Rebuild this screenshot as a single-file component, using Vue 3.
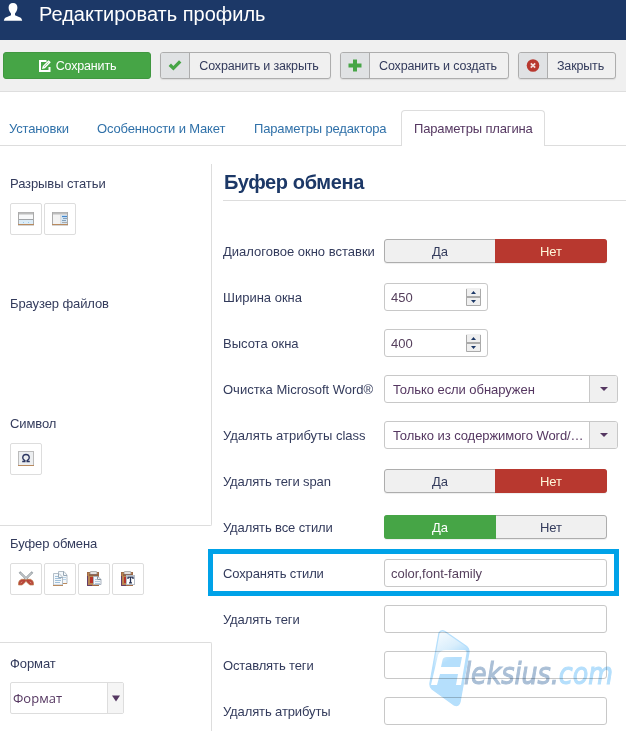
<script setup>
import { ref } from 'vue'

const actions = [
  { icon: 'check', label: 'Сохранить и закрыть', cls: 'close-save' },
  { icon: 'plus', label: 'Сохранить и создать', cls: 'new-save' },
  { icon: 'cancel', label: 'Закрыть', cls: 'cancel' },
]
const tabs = [
  { label: 'Установки', cls: 't1' },
  { label: 'Особенности и Макет', cls: 't2' },
  { label: 'Параметры редактора', cls: 't3' },
  { label: 'Параметры плагина', cls: 'active' },
]
const sections = [
  { title: 'Разрывы статьи', icons: ['more', 'page'], cls: 'first' },
  { title: 'Браузер файлов', icons: [], cls: '' },
  { title: 'Символ', icons: ['omega'], cls: '' },
  { title: 'Буфер обмена', icons: ['cut', 'copy', 'paste', 'pastetext'], cls: 'open' },
  { title: 'Формат', icons: [], select: 'Формат', cls: 'last' },
]
const rows = ref([
  { label: 'Диалоговое окно вставки', type: 'toggle', value: false },
  { label: 'Ширина окна', type: 'number', value: '450' },
  { label: 'Высота окна', type: 'number', value: '400' },
  { label: 'Очистка Microsoft Word®', type: 'select', value: 'Только если обнаружен' },
  { label: 'Удалять атрибуты class', type: 'select', value: 'Только из содержимого Word/…' },
  { label: 'Удалять теги span', type: 'toggle', value: false, tight: true },
  { label: 'Удалять все стили', type: 'toggle', value: true, tight: true },
  { label: 'Сохранять стили', type: 'text', value: 'color,font-family', mark: true, tight: true },
  { label: 'Удалять теги', type: 'text', value: '', tight: true },
  { label: 'Оставлять теги', type: 'text', value: '', tight: true },
  { label: 'Удалять атрибуты', type: 'text', value: '', tight: true },
])
</script>

<template>
  <div class="page">
    <header class="header">
      <svg class="user" width="20" height="20" viewBox="0 0 20 20">
        <path fill="#fff" d="M10 1C12.800 1 14.500 2.800 14.400 5.800C14.300 8.300 13.200 10.200 12 11.400V13.200L16 15C18 15.700 18.800 16.700 19.200 18.800H0.800C1.200 16.700 2 15.700 4 15L8 13.200V11.400C6.800 10.200 5.700 8.300 5.600 5.800C5.500 2.800 7.200 1 10 1Z" />
      </svg>
      <h1>Редактировать профиль</h1>
    </header>

    <div class="toolbar">
      <button class="save">
        <svg width="14" height="14" viewBox="0 0 14 14">
          <path d="M8.500 2H2V12H11.500V8" fill="none" stroke="#fff" stroke-width="2" />
          <path d="M4 10L4.800 7L10.600 1.200L12.800 3.300L7 9.200Z" fill="#fff" />
          <path d="M6 7.800L10.500 3.400" stroke="#46a546" stroke-width="0.600" />
        </svg>
        <span>Сохранить</span>
      </button>
      <button v-for="a in actions" :key="a.icon" class="action" :class="a.cls">
        <span class="cell">
          <svg width="14" height="14" viewBox="0 0 14 14">
            <path v-if="a.icon === 'check'" d="M0.600 7L3 4.500L5.400 6.900L11 1.200L13.400 3.500L5.400 11.600Z" fill="#46a546" />
            <path v-else-if="a.icon === 'plus'" d="M5 0.500H9V4.500H13.500V8.500H9V12.500H5V8.500H0.500V4.500H5Z" fill="#46a546" />
            <g v-else>
              <circle cx="7" cy="6.500" r="6.300" fill="#b8382f" />
              <path d="M4.800 4.300L9.200 8.700M9.200 4.300L4.800 8.700" stroke="#f3dddb" stroke-width="1.700" />
            </g>
          </svg>
        </span>
        <span class="txt">{{ a.label }}</span>
      </button>
    </div>

    <nav class="tabs">
      <a v-for="t in tabs" :key="t.label" :class="t.cls"><span>{{ t.label }}</span></a>
    </nav>

    <div class="content">
      <aside class="side">
        <section v-for="s in sections" :key="s.title" :class="s.cls">
          <h3>{{ s.title }}</h3>
          <div v-if="s.icons.length" class="icons">
            <span v-for="i in s.icons" :key="i" class="tile">
              <svg width="16" height="16" viewBox="0 0 16 16">
                <g v-if="i === 'more'">
                  <rect x="0.500" y="1.500" width="15" height="12.500" fill="#f8f9fa" stroke="#aaa" />
                  <path d="M1 2.500H15" stroke="#bdbdbd" stroke-width="2" />
                  <path d="M1 8.500H15" stroke="#a0a4a8" />
                  <rect x="1" y="9" width="14" height="4" fill="#dcecf7" />
                  <path d="M5 11.500H6M10 11.500H11" stroke="#9ccbe8" />
                  <path d="M0 13.500H16" stroke="#b98a5e" />
                </g>
                <g v-else-if="i === 'page'">
                  <rect x="0.500" y="1.500" width="15" height="12.500" fill="#f3f3f3" stroke="#aaa" />
                  <path d="M1 2.500H15" stroke="#bdbdbd" stroke-width="2" />
                  <path d="M8.500 4V13" stroke="#ddd" />
                  <rect x="9" y="4" width="6" height="9" fill="#d5e5f2" />
                  <path d="M10 5.500H15" stroke="#4386cc" stroke-width="1.200" />
                  <path d="M11 7.500H15M10 9.500H14" stroke="#84a0ba" />
                  <path d="M10 11.500H15" stroke="#aaa" />
                  <path d="M0 13.500H16" stroke="#b98a5e" />
                </g>
                <g v-else-if="i === 'omega'">
                  <rect x="0.500" y="0.500" width="15" height="14" fill="#eceef0" stroke="#bbb" />
                  <path d="M0 14.500H16" stroke="#b98a5e" />
                  <path d="M4.200 10.500H6.900V9.500C3.500 7.800 4.300 3.500 8 3.500S12.500 7.800 9.100 9.500V10.500H11.800" fill="none" stroke="#2b3560" stroke-width="1.300" />
                </g>
                <g v-else-if="i === 'cut'">
                  <path d="M1.500 1L10.500 10M14.500 1L5.500 10" stroke="#8f979c" stroke-width="2.400" />
                  <path d="M2 1.500L9.500 9M14 1.500L6.500 9" stroke="#e1e5e7" stroke-width="1" />
                  <path d="M7 8.300L3.500 8.300Q0.500 9.500 0.500 12V14H4L6.500 12L8 10L9.500 12L12 14H15.500V12Q15.500 9.500 12.500 8.300L9 8.300L8 9.200Z" fill="#b8443a" stroke="#bd8150" stroke-width="0.700" />
                  <path d="M2.600 12L4.300 10.800M13.400 12L11.700 10.800" stroke="#d9a184" stroke-width="0.900" />
                </g>
                <g v-else-if="i === 'copy'">
                  <path d="M6.500 0.500H12L15 4V12.500H6.500Z" fill="#f4f8fb" stroke="#b3bec8" />
                  <path d="M11.500 0.500V4.500H15" fill="none" stroke="#98a8b6" />
                  <path d="M11 6.500H14M11 8.500H14" stroke="#b9d3e8" />
                  <path d="M1.500 2.500H7L10.500 6V14H1.500Z" fill="#f4f8fb" stroke="#b3bec8" />
                  <path d="M6.500 2.500V6.500H10.500" fill="none" stroke="#98a8b6" />
                  <path d="M3 5.500H6M3 7.500H9M3 9.500H9M3 11.500H8" stroke="#a0c0da" />
                  <path d="M1 14.500H11M11 12.500H15" stroke="#b98a5e" />
                </g>
                <g v-else>
                  <rect x="1.500" y="1.500" width="11" height="13" fill="#b98552" stroke="#a06a45" />
                  <path d="M1.500 5V14.500H6" fill="none" stroke="#643d68" />
                  <rect x="4" y="0.500" width="7" height="3" rx="1" fill="#e4e0de" stroke="#888" stroke-width="0.600" />
                  <path d="M3 4H12" stroke="#704038" />
                  <rect x="4" y="6" width="4" height="6" fill="#b7322a" />
                  <g v-if="i === 'paste'">
                    <path d="M7.500 5.500H12L15 8.500V13.500H7.500Z" fill="#f2f6fa" stroke="#aab3bf" />
                    <path d="M9 8.500H11M9 10.500H14M9 12.500H14" stroke="#b4cade" />
                    <path d="M11.500 5.500V8.500H15" fill="none" stroke="#8895a0" />
                  </g>
                  <g v-else>
                    <rect x="6.500" y="4.500" width="8" height="9" fill="#fff" stroke="#b6bec8" />
                    <path d="M8 8V6.200H13V8M10.500 6.200V11.800M9 11.800H12" fill="none" stroke="#273255" stroke-width="1.300" />
                  </g>
                </g>
              </svg>
            </span>
          </div>
          <div v-if="s.select" class="format">
            <span>{{ s.select }}</span>
            <i><svg width="8" height="7" viewBox="0 0 8 7"><path d="M0 0.500H8L4 6.500Z" fill="#553761" /></svg></i>
          </div>
        </section>
      </aside>

      <main class="main">
        <h2><span>Буфер обмена</span></h2>
        <div v-for="r in rows" :key="r.label" class="row" :class="{ mark: r.mark, tight: r.tight }">
          <label><span>{{ r.label }}</span></label>
          <div v-if="r.type === 'toggle'" class="toggle">
            <span :class="{ yes: r.value }">Да</span>
            <span :class="{ no: !r.value }">Нет</span>
          </div>
          <div v-else-if="r.type === 'number'" class="field number">
            <span>{{ r.value }}</span>
            <svg width="15" height="18" viewBox="0 0 15 18">
              <rect x="0" y="0" width="15" height="18" fill="#efefef" />
              <path d="M0.500 1V17.500H14.500V1" fill="none" stroke="#aaa" />
              <path d="M0 9H15" stroke="#aaa" stroke-width="2" />
              <path d="M5 6H10L7.500 3Z" fill="#1c3867" />
              <path d="M5 12H10L7.500 15Z" fill="#1c3867" />
            </svg>
          </div>
          <div v-else-if="r.type === 'select'" class="select">
            <span>{{ r.value }}</span>
            <i><svg width="8" height="4" viewBox="0 0 8 4"><path d="M0 0H8L4 4Z" fill="#553761" /></svg></i>
          </div>
          <div v-else class="field"><span>{{ r.value }}</span></div>
        </div>
      </main>
    </div>

    <svg class="watermark" width="198" height="80" viewBox="0 0 198 80">
      <defs>
        <linearGradient id="wm" x1="0" y1="0" x2="0.300" y2="1">
          <stop offset="0" stop-color="#fff" />
          <stop offset="0.350" stop-color="#d9eefc" />
          <stop offset="0.500" stop-color="#b5dffc" />
        </linearGradient>
      </defs>
      <path d="M11 3Q13 -0.500 17 1.500L38 16Q41 18 41 22L32 72Q31 77 26 75L4 59Q1.500 57 2 53L11 3Z" fill="url(#wm)" stroke="#b5dffc" stroke-width="1.300" />
      <path d="M3 55L10 25Q12 20 18 20H36Q39 20 38.500 23L33 55H28L30 44H12L9 55ZM13 37H32L34 27H19Q15 27 14.500 30Z" fill="#fff" fill-rule="evenodd" />
      <text x="36" y="54" textLength="149" lengthAdjust="spacingAndGlyphs" fill="#aabfd6" stroke="#aabfd6">leksius.<tspan fill="#b5dffc" stroke="#b5dffc">com</tspan></text>
    </svg>
  </div>
</template>

<style>
body { margin: 0; background: #fff; overflow: hidden; }
</style>

<style scoped>
.page { position: relative; width: 626px; height: 731px; overflow: hidden; background: #fff; font-family: "Liberation Sans", Arial, sans-serif; font-size: 13px; color: #333b5c; line-height: 18px; }
.page * { box-sizing: border-box; }
h1, h2, h3 { margin: 0; font-weight: normal; }
.header { height: 40px; background: #1c3867; display: flex; align-items: flex-start; padding: 2px 0 0 3px; }
.header h1 { margin-left: 16px; color: #fff; font-size: 20px; line-height: 25px; white-space: nowrap; }
.toolbar { height: 52px; background: #f0f0f0; border-bottom: 1px solid #dedede; display: flex; padding: 12px 0 0 3px; gap: 9px; font-size: 12.500px; letter-spacing: -0.160px; }
button { font: inherit; letter-spacing: inherit; padding: 0; height: 27px; border-radius: 3px; display: flex; align-items: center; white-space: nowrap; }
.save { width: 148px; background: #46a546; border: 1px solid #409740; color: #fff; justify-content: center; gap: 4px; }
.action { background: #f0f0f0; border: 1px solid #adadad; color: #333b5c; overflow: hidden; box-shadow: 0 1px 1px #ddd; }
.cell { width: 29px; height: 100%; background: #e0e2e4; border-right: 1px solid #adadad; display: flex; align-items: center; justify-content: center; }
.txt { flex: 1; text-align: center; padding-right: 2px; }
.close-save { width: 171px; }
.new-save { width: 169px; }
.cancel { width: 98px; }
.tabs { height: 54px; border-bottom: 1px solid #ddd; display: flex; padding-top: 18px; white-space: nowrap; letter-spacing: -0.150px; }
.tabs a { color: #3071a9; height: 36px; padding: 10px 0 0 0; }
.tabs .t1 { margin-left: 9px; width: 88px; }
.tabs .t2 { width: 157px; }
.tabs .t3 { width: 147px; }
.tabs .active { width: 144px; color: #553761; border: 1px solid #ddd; border-bottom: 0; border-radius: 4px 4px 0 0; background: #fff; padding: 9px 0 0 12px; }
.content { display: flex; }
.side { width: 212px; padding-top: 18px; flex: none; }
.side section { height: 120px; border-right: 1px solid #ddd; padding: 11px 0 0 10px; }
.side .first { height: 120px; }
.side section:nth-child(3) { height: 122px; border-bottom: 1px solid #ddd; border-radius: 0 0 2px 0; }
.side .open { height: 116px; border-right-color: transparent; padding-top: 9px; }
.side .last { border-top: 1px solid #ddd; border-radius: 0 2px 0 0; padding-top: 12px; }
.side h3 { font-size: 13px; line-height: 18px; letter-spacing: -0.100px; }
.icons { display: flex; gap: 2px; margin-top: 10px; }
.tile { width: 32px; height: 32px; border: 1px solid #ddd; border-radius: 2px; display: flex; align-items: center; justify-content: center; }
.tile svg { margin-right: 1px; }
.format { margin-top: 9px; width: 114px; height: 32px; border: 1px solid #ddd; border-radius: 2px; display: flex; align-items: center; color: #553761; font-family: "Open Sans", sans-serif; font-size: 13px; }
.format span { flex: 1; padding-left: 2px; }
.format i { width: 16px; height: 100%; background: #f5f5f5; border-left: 1px solid #ddd; display: flex; align-items: center; justify-content: center; }
.main { width: 414px; padding-left: 11px; }
h2 { height: 55px; border-bottom: 1px solid #ddd; color: #1c3867; font-size: 20px; font-weight: bold; letter-spacing: -0.380px; line-height: 24px; padding: 24px 0 0 1px; margin-bottom: 27px; }
.row { height: 46px; display: flex; align-items: center; }
.row label { width: 161px; padding-top: 2px; white-space: nowrap; flex: none; }
.tight label { letter-spacing: -0.120px; }
.toggle { width: 223px; height: 24px; display: flex; border: 1px solid #adadad; border-radius: 3px; background: #f0f0f0; box-shadow: 0 1px 1px #eee; }
.toggle span { flex: 1; text-align: center; line-height: 24px; }
.toggle .yes, .toggle .no { flex: 0 0 112px; line-height: 26px; }
.toggle .yes { background: #46a546; color: #fff; margin: -1px 0 -1px -1px; border-radius: 3px 0 0 3px; }
.toggle .no { background: #b8382f; color: #fff6d8; margin: -1px -1px -1px 0; border-radius: 0 3px 3px 0; }
.field { width: 223px; height: 28px; border: 1px solid #c8c8c8; border-radius: 3px; padding: 0 6px; display: flex; align-items: center; color: #553f5c; }
.number { width: 104px; justify-content: space-between; }
.field span { padding-top: 2px; }
.select { width: 234px; height: 28px; border: 1px solid #c8c8c8; border-radius: 3px; display: flex; align-items: center; color: #553761; overflow: hidden; letter-spacing: -0.060px; }
.select span { flex: 1; padding: 2px 0 0 8px; white-space: nowrap; }
.select i { width: 28px; flex: none; height: 100%; background: #f0f0f0; border-left: 1px solid #c8c8c8; display: flex; align-items: center; justify-content: center; }
.mark { margin: -1px 0 0 -15px; width: 411px; padding-left: 10px; border: 5px solid #00a2e8; height: 47px; }
.watermark { position: absolute; left: 428px; top: 630px; font-family: "DejaVu Sans", sans-serif; font-style: italic; font-size: 31px; stroke-width: 1.100px; mix-blend-mode: multiply; }
</style>
